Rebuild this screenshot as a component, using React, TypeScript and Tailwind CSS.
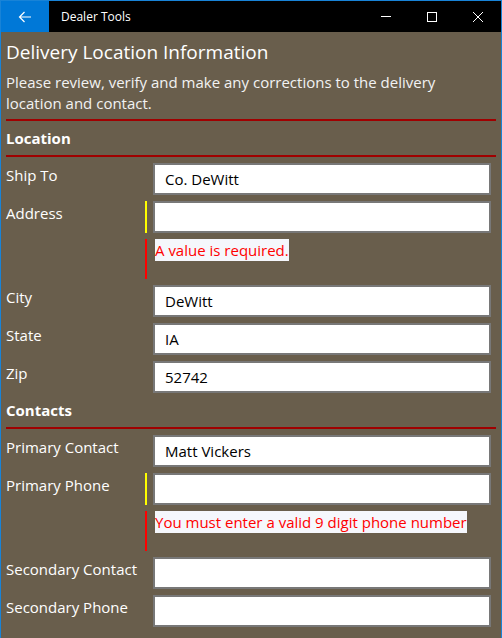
import React from 'react';

const font = { fontFamily: '"Open Sans", "Noto Sans", sans-serif' };

function Field({ label, value, flagged }: { label: string; value?: string; flagged?: boolean }) {
  return (
    <div className="flex h-[32px] items-start">
      <div className="w-[139px] leading-[24px] text-[15px] text-white whitespace-nowrap">{label}</div>
      <div className={`h-[32px] w-[2px] ${flagged ? 'bg-[#ffff00]' : ''}`}></div>
      <div className="ml-[6px] flex h-[32px] w-[338px] items-center border-2 border-[#787878] bg-white pl-[10px] text-[15px] text-black">
        {value}
      </div>
    </div>
  );
}

function ErrorNote({ text }: { text: string }) {
  return (
    <div className="flex h-[40px] items-start">
      <div className="w-[139px]"></div>
      <div className="h-[40px] w-[2px] bg-[#ff0000]"></div>
      <div className="ml-[8px] bg-[#f5f7fc] text-[15px] leading-[22px] text-[#ff0000] whitespace-nowrap">{text}</div>
    </div>
  );
}

function SectionHeader({ title }: { title: string }) {
  return (
    <div>
      <div className="flex h-[34px] items-center text-[15px] font-bold text-white">{title}</div>
      <div className="h-[2px] w-[490px] bg-[#a00000]"></div>
    </div>
  );
}

export default function App() {
  return (
    <div className="h-[638px] w-[502px] overflow-hidden border-x border-t border-[#1883d7] bg-[#695e4c]" style={font}>
      {/* title bar */}
      <div className="flex h-[31px] items-center bg-black text-white">
        <div className="flex h-[31px] w-[48px] items-center justify-center bg-[#0078d7]">
          <svg width="14" height="12" viewBox="0 0 14 12" fill="none" stroke="white" strokeWidth="1.2">
            <path d="M13 6H1.5M6.5 1L1.5 6l5 5" />
          </svg>
        </div>
        <div className="ml-[12px] text-[12px]">Dealer Tools</div>
        <div className="ml-auto flex h-[31px]">
          <div className="flex w-[46px] items-center justify-center">
            <div className="h-[1px] w-[10px] bg-white"></div>
          </div>
          <div className="flex w-[46px] items-center justify-center">
            <div className="h-[10px] w-[10px] border border-white"></div>
          </div>
          <div className="flex w-[46px] items-center justify-center">
            <svg width="10" height="10" viewBox="0 0 10 10" stroke="white" strokeWidth="1">
              <path d="M0 0L10 10M10 0L0 10" />
            </svg>
          </div>
        </div>
      </div>

      <div className="flex flex-col px-[5px]">
        <div className="mt-[6px] text-[19px] leading-[28px] text-white">Delivery Location Information</div>
        <div className="mt-[6px] text-[15px] leading-[21px] text-[#f2f2f2]">
          Please review, verify and make any corrections to the delivery
          <br />
          location and contact.
        </div>
        <div className="mt-[5px] h-[2px] w-[490px] bg-[#a00000]"></div>

        <SectionHeader title="Location" />
        <div className="mt-[6px] flex flex-col gap-[6px]">
          <Field label="Ship To" value="Co. DeWitt" />
          <Field label="Address" flagged />
          <ErrorNote text="A value is required." />
          <Field label="City" value="DeWitt" />
          <Field label="State" value="IA" />
          <Field label="Zip" value="52742" />
        </div>

        <SectionHeader title="Contacts" />
        <div className="mt-[6px] flex flex-col gap-[6px]">
          <Field label="Primary Contact" value="Matt Vickers" />
          <Field label="Primary Phone" flagged />
          <ErrorNote text="You must enter a valid 9 digit phone number" />
          <Field label="Secondary Contact" />
          <Field label="Secondary Phone" />
        </div>
      </div>
    </div>
  );
}
